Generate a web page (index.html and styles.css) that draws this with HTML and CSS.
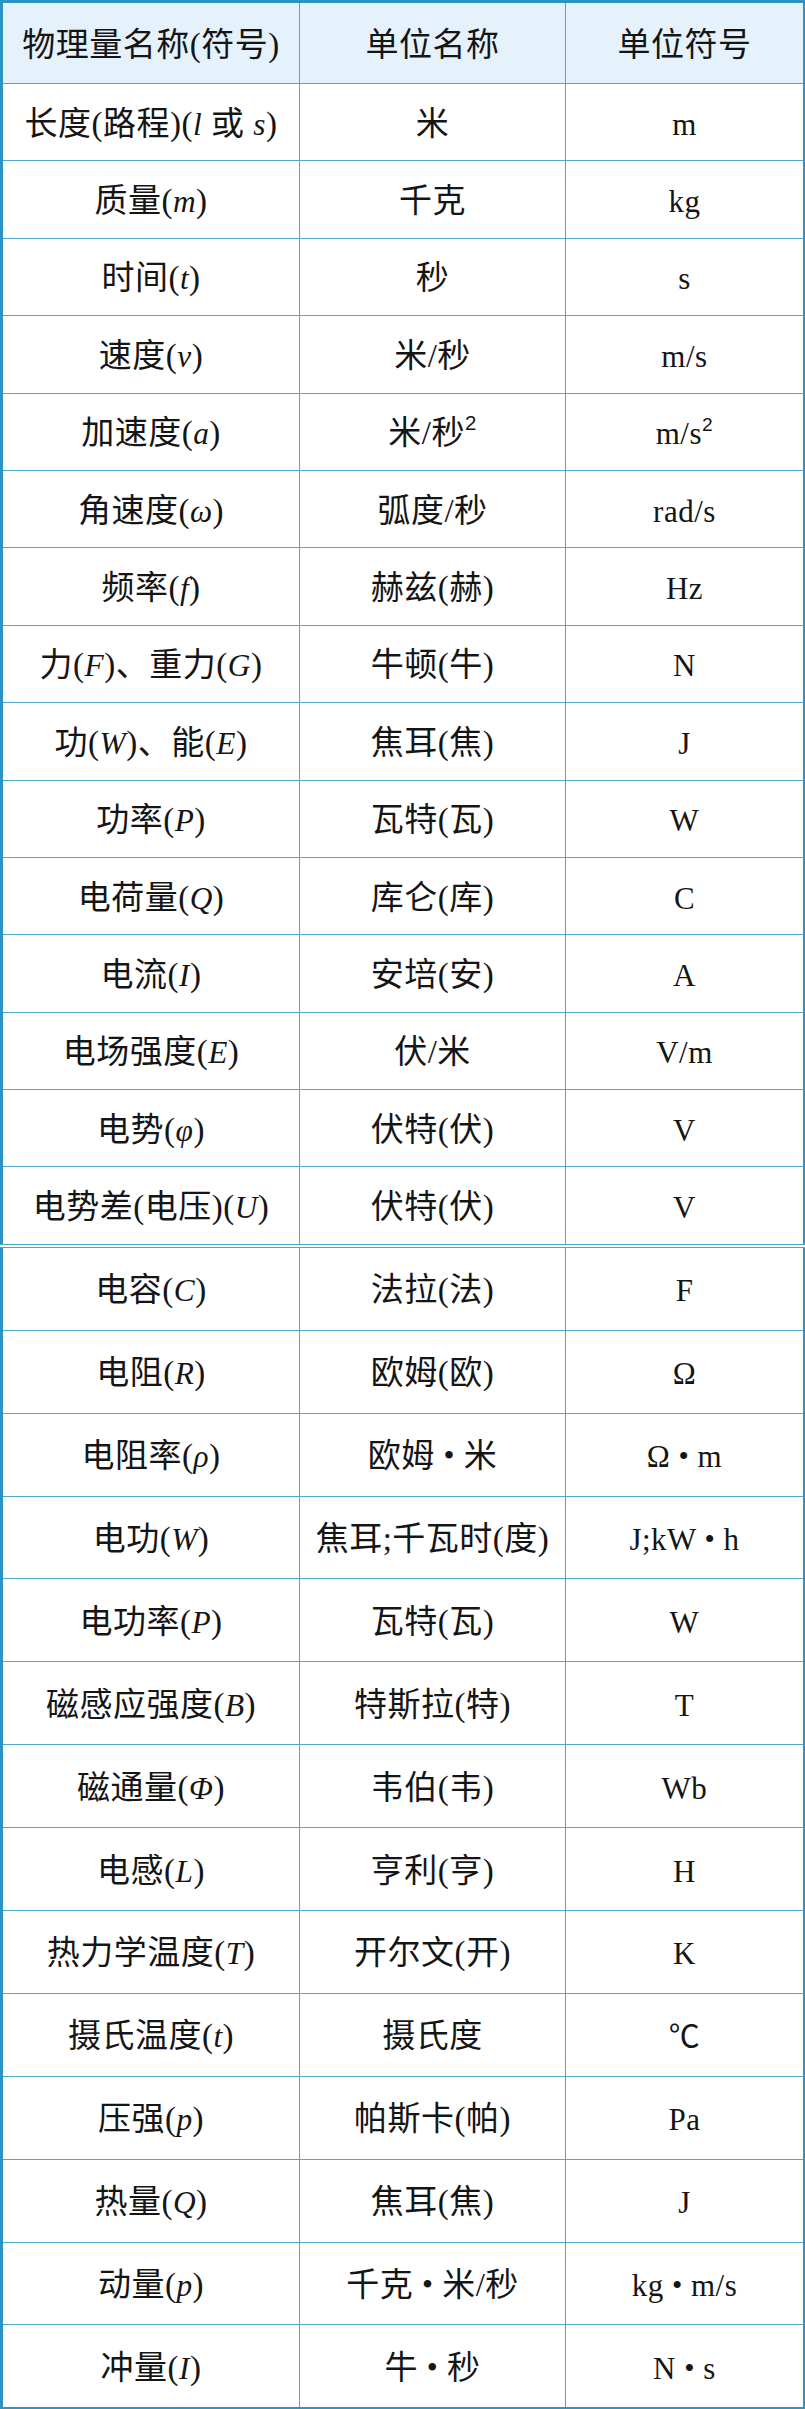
FILE: index.html
```html
<!DOCTYPE html>
<html lang="zh-CN">
<head>
<meta charset="utf-8">
<title>物理量单位表</title>
<link rel="stylesheet" href="styles.css">
</head>
<body>
<table class="units">
  <colgroup>
    <col class="c1"><col class="c2"><col class="c3">
  </colgroup>
  <thead>
    <tr><th>物理量名称(符号)</th><th>单位名称</th><th>单位符号</th></tr>
  </thead>
  <tbody class="upper">
    <tr><td>长度(路程)(<i>l</i> 或 <i>s</i>)</td><td>米</td><td class="sym">m</td></tr>
    <tr><td>质量(<i>m</i>)</td><td>千克</td><td class="sym">kg</td></tr>
    <tr><td>时间(<i>t</i>)</td><td>秒</td><td class="sym">s</td></tr>
    <tr><td>速度(<i>v</i>)</td><td>米/秒</td><td class="sym">m/s</td></tr>
    <tr><td>加速度(<i>a</i>)</td><td>米/秒<sup>2</sup></td><td class="sym">m/s<sup>2</sup></td></tr>
    <tr><td>角速度(<i>ω</i>)</td><td>弧度/秒</td><td class="sym">rad/s</td></tr>
    <tr><td>频率(<i>f</i>)</td><td>赫兹(赫)</td><td class="sym">Hz</td></tr>
    <tr><td>力(<i>F</i>)、重力(<i>G</i>)</td><td>牛顿(牛)</td><td class="sym">N</td></tr>
    <tr><td>功(<i>W</i>)、能(<i>E</i>)</td><td>焦耳(焦)</td><td class="sym">J</td></tr>
    <tr><td>功率(<i>P</i>)</td><td>瓦特(瓦)</td><td class="sym">W</td></tr>
    <tr><td>电荷量(<i>Q</i>)</td><td>库仑(库)</td><td class="sym">C</td></tr>
    <tr><td>电流(<i>I</i>)</td><td>安培(安)</td><td class="sym">A</td></tr>
    <tr><td>电场强度(<i>E</i>)</td><td>伏/米</td><td class="sym">V/m</td></tr>
    <tr><td>电势(<i>φ</i>)</td><td>伏特(伏)</td><td class="sym">V</td></tr>
    <tr><td>电势差(电压)(<i>U</i>)</td><td>伏特(伏)</td><td class="sym">V</td></tr>
  </tbody>
  <tbody class="lower">
    <tr><td>电容(<i>C</i>)</td><td>法拉(法)</td><td class="sym">F</td></tr>
    <tr><td>电阻(<i>R</i>)</td><td>欧姆(欧)</td><td class="sym">Ω</td></tr>
    <tr><td>电阻率(<i>ρ</i>)</td><td>欧姆 <span class="dot">•</span> 米</td><td class="sym">Ω <span class="dot">•</span> m</td></tr>
    <tr><td>电功(<i>W</i>)</td><td>焦耳;千瓦时(度)</td><td class="sym">J;kW <span class="dot">•</span> h</td></tr>
    <tr><td>电功率(<i>P</i>)</td><td>瓦特(瓦)</td><td class="sym">W</td></tr>
    <tr><td>磁感应强度(<i>B</i>)</td><td>特斯拉(特)</td><td class="sym">T</td></tr>
    <tr><td>磁通量(<i>Φ</i>)</td><td>韦伯(韦)</td><td class="sym">Wb</td></tr>
    <tr><td>电感(<i>L</i>)</td><td>亨利(亨)</td><td class="sym">H</td></tr>
    <tr><td>热力学温度(<i>T</i>)</td><td>开尔文(开)</td><td class="sym">K</td></tr>
    <tr><td>摄氏温度(<i>t</i>)</td><td>摄氏度</td><td class="sym">℃</td></tr>
    <tr><td>压强(<i>p</i>)</td><td>帕斯卡(帕)</td><td class="sym">Pa</td></tr>
    <tr><td>热量(<i>Q</i>)</td><td>焦耳(焦)</td><td class="sym">J</td></tr>
    <tr><td>动量(<i>p</i>)</td><td>千克 <span class="dot">•</span> 米/秒</td><td class="sym">kg <span class="dot">•</span> m/s</td></tr>
    <tr><td>冲量(<i>I</i>)</td><td>牛 <span class="dot">•</span> 秒</td><td class="sym">N <span class="dot">•</span> s</td></tr>
  </tbody>
</table>
</body>
</html>
```

FILE: styles.css
```css
html, body {
  margin: 0;
  padding: 0;
  background: #ffffff;
}

.units {
  border-collapse: collapse;
  table-layout: fixed;
  width: 803px;
  border: 3px solid #2e92c2;
  font-family: "Liberation Serif", "Noto Sans CJK SC", serif;
  font-size: 33px;
  font-weight: 400;
  color: #151515;
  line-height: 1;
}

.c1 { width: 298px; }
.c2 { width: 266px; }
.c3 { width: 239px; }

.units th,
.units td {
  border: 1.5px solid #4fa8cc;
  text-align: center;
  vertical-align: middle;
  padding: 4px 0 0 0;
  font-weight: 400;
  white-space: nowrap;
  letter-spacing: 0.5px;
}

.units thead th {
  background: #e5f2fb;
  height: 76px;
}

.upper td {
  height: 72.4px;
}

.lower td {
  height: 77.9px;
}

.upper {
  border-bottom: 4px double #4aa6cc;
}

.units i {
  font-size: 0.95em;
}

.sym {
  font-size: 31px;
}

.units sup {
  font-family: "Liberation Sans", sans-serif;
  font-size: 0.62em;
  vertical-align: 0.7em;
  line-height: 0;
}

.dot {
  font-size: 0.95em;
  vertical-align: 0.02em;
}
```
